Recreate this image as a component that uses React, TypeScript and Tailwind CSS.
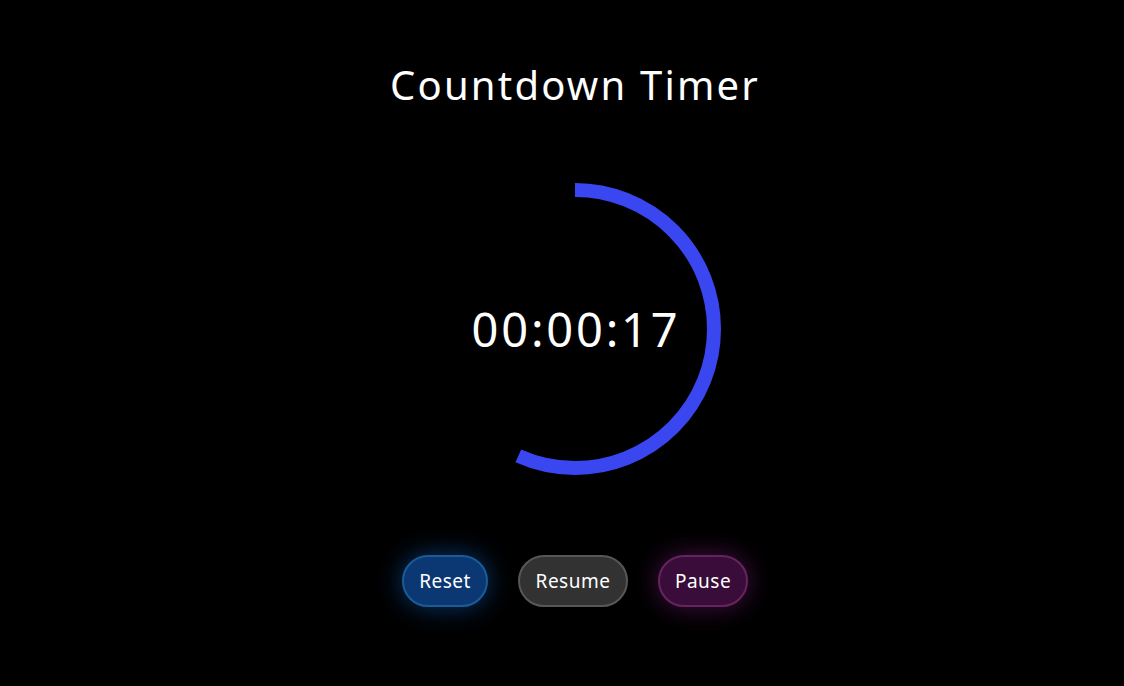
import React from "react";

const R = 139;
const C = 2 * Math.PI * R;

export default function App() {
  const total = 30;
  const left = 17;
  const progress = left / total;

  return (
    <div
      className="min-h-screen w-full bg-black text-white flex flex-col items-center pt-[61px] pl-[26px]"
      style={{ fontFamily: '"Noto Sans", "Open Sans", sans-serif' }}
    >
      <h1 className="text-[40px] leading-[48px] font-normal tracking-[2.2px]">Countdown Timer</h1>

      {/* Ring */}
      <div className="relative w-[300px] h-[300px] mt-[70px]">
        <svg width="300" height="300" viewBox="0 0 300 300" className="absolute inset-0">
          <circle
            cx="150"
            cy="150"
            r={R}
            fill="none"
            stroke="#3a46f0"
            strokeWidth="14"
            strokeDasharray={`${C * progress} ${C}`}
            transform="rotate(-90 150 150)"
          />
        </svg>
        <div className="absolute inset-0 flex items-center justify-center">
          <span className="text-[47px] leading-none tracking-[2.8px] pl-[2px]">00:00:17</span>
        </div>
      </div>

      {/* Buttons */}
      <div className="flex items-center gap-[30px] mt-[76px]">
        <button className="h-[52px] w-[86px] rounded-full bg-[#0b3872] border-2 border-[#1a5b98] text-[19px] tracking-[0.5px] text-white shadow-[0_0_26px_rgba(20,110,220,0.5)]">
          Reset
        </button>
        <button className="h-[52px] w-[110px] rounded-full bg-[#323232] border-2 border-[#575757] text-[19px] tracking-[0.5px] text-white">
          Resume
        </button>
        <button className="h-[52px] w-[90px] rounded-full bg-[#3a0c3a] border-2 border-[#66245f] text-[19px] tracking-[0.5px] text-white shadow-[0_0_26px_rgba(170,40,170,0.4)]">
          Pause
        </button>
      </div>
    </div>
  );
}
